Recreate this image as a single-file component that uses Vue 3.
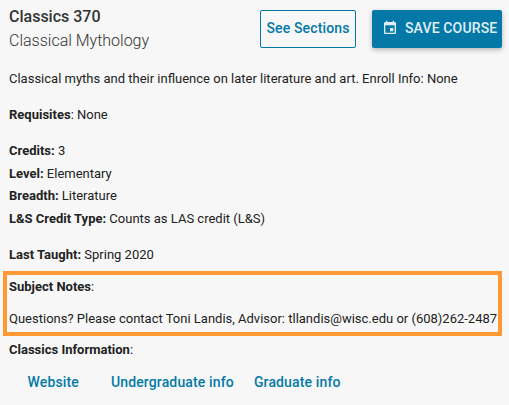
<template>
  <main class="course">
    <header class="course-header">
      <div class="course-title">
        <h1>Classics 370</h1>
        <h2>Classical Mythology</h2>
      </div>
      <button class="btn btn-outline">See Sections</button>
      <button class="btn btn-primary">
        <svg viewBox="0 0 24 24" fill="currentColor">
          <path d="M17 12h-5v5h5v-5zM16 1v2H8V1H6v2H5c-1.11 0-1.99.9-1.99 2L3 19c0 1.1.89 2 2 2h14c1.1 0 2-.9 2-2V5c0-1.1-.9-2-2-2h-1V1h-2zm3 18H5V8h14v11z" />
        </svg>
        <span>SAVE COURSE</span>
      </button>
    </header>

    <p class="description">Classical myths and their influence on later literature and art. Enroll Info: None</p>
    <p class="requisites"><strong>Requisites</strong>: None</p>

    <div class="details">
      <div v-for="item in details" :key="item.label">
        <strong>{{ item.label }}:</strong> {{ item.value }}
      </div>
    </div>

    <p class="last-taught"><strong>Last Taught:</strong> Spring 2020</p>

    <section class="notes">
      <p><strong>Subject Notes</strong>:</p>
      <p class="contact">Questions? Please contact Toni Landis, Advisor: tllandis@wisc.edu or (608)262-2487</p>
    </section>

    <p class="info"><strong>Classics Information</strong>:</p>
    <nav class="links">
      <a v-for="link in links" :key="link" href="#">{{ link }}</a>
    </nav>
  </main>
</template>

<script setup>
const details = [
  { label: 'Credits', value: '3' },
  { label: 'Level', value: 'Elementary' },
  { label: 'Breadth', value: 'Literature' },
  { label: 'L&S Credit Type', value: 'Counts as LAS credit (L&S)' }
]

const links = ['Website', 'Undergraduate info', 'Graduate info']
</script>

<style>
body {
  background: #f7f7f7;
}
</style>

<style scoped>
.course {
  box-sizing: border-box;
  width: 509px;
  height: 405px;
  padding: 5px 7px 0 9px;
  overflow: hidden;
  background: #f7f7f7;
  color: #222;
  font-family: Roboto, sans-serif;
  font-size: 13px;
  line-height: 22.5px;
  white-space: nowrap;
}

p {
  margin: 0;
}

strong {
  font-weight: 700;
}

.course-header {
  display: flex;
  height: 63px;
}

.course-title {
  flex: 1;
}

.course-title h1,
.course-title h2 {
  margin: 0;
  font-size: 16px;
  line-height: 24px;
  color: #333;
}

.course-title h1 {
  font-weight: 500;
}

.course-title h2 {
  font-weight: 300;
}

.btn {
  display: flex;
  align-items: center;
  justify-content: center;
  box-sizing: border-box;
  height: 38px;
  margin-top: 5px;
  padding: 0;
  border: 0;
  border-radius: 2px;
  font-family: inherit;
  font-size: 14px;
  font-weight: 500;
  letter-spacing: 0.14px;
  cursor: pointer;
}

.btn-outline {
  width: 96px;
  padding-bottom: 2px;
  border: 1px solid #0479a8;
  background: transparent;
  color: #0479a8;
}

.btn-primary {
  width: 130px;
  margin-left: 16px;
  justify-content: flex-start;
  padding-left: 10px;
  background: #0479a8;
  color: #e1f0f6;
  box-shadow: 0 2px 5px rgba(0, 0, 0, 0.26);
}

.btn-primary svg {
  width: 16px;
  height: 16px;
  margin: 0 7px 2px 0;
}

.btn-primary span {
  padding-bottom: 2px;
}

.requisites {
  margin-top: 13.5px;
}

.details {
  margin-top: 13.5px;
}

.last-taught {
  margin-top: 13.5px;
}

.notes {
  box-sizing: border-box;
  width: 499px;
  height: 65px;
  margin: 5px 0 0 -6px;
  padding: 1px 2px 0;
  border: 4px solid #ff9933;
}

.contact {
  margin-top: 9.5px;
}

.info {
  margin-top: 3px;
}

.links {
  display: flex;
  margin-top: 9px;
  padding-left: 18.5px;
}

.links a {
  margin-right: 20px;
  color: #0479a8;
  font-size: 14px;
  font-weight: 500;
  letter-spacing: 0.14px;
  text-decoration: none;
}

.links a:first-child {
  margin-right: 32px;
}
</style>
